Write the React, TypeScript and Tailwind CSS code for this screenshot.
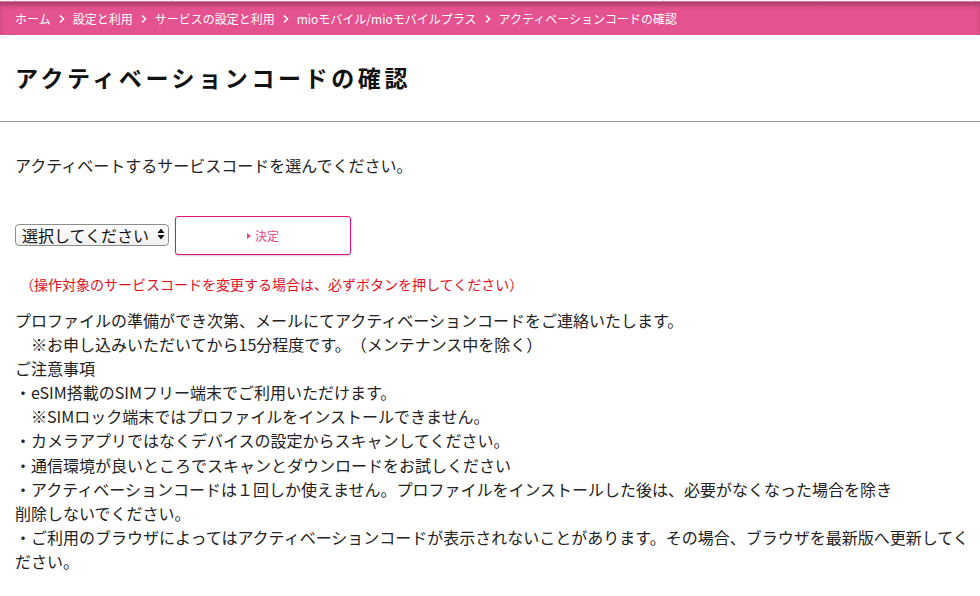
import React from "react";

const Chevron = () => (
  <svg width="6" height="10" viewBox="0 0 6 10" className="mx-[8px] shrink-0" aria-hidden>
    <path d="M1 1.5 L4.6 5 L1 8.5" fill="none" stroke="white" strokeWidth="1.5" />
  </svg>
);

export default function App() {
  const crumbs = [
    "ホーム",
    "設定と利用",
    "サービスの設定と利用",
    "mioモバイル/mioモバイルプラス",
    "アクティベーションコードの確認",
  ];
  return (
    <div
      className="w-[980px] min-h-[596px] bg-white text-[#222] [text-spacing-trim:space-all]"
      style={{ fontFamily: '"Noto Sans CJK JP", "Noto Sans", sans-serif' }}
    >
      {/* top nav remnant */}
      <div className="flex h-[1px] bg-white">
        <div className="w-[15px]" />
        <div className="w-[157px] border-l border-[#ccc]" />
        <div className="w-[491px] border-l border-[#ccc]" />
        <div className="w-[155px] border-l border-[#ccc]" />
        <div className="w-[156px] border-l border-[#ccc]" />
        <div className="flex-1 border-l border-[#ccc]" />
      </div>

      {/* breadcrumb */}
      <nav className="flex h-[34px] items-center bg-[#e4528f] px-[15px] text-[12px] leading-none text-white shadow-[inset_0_4px_4px_-1px_rgba(0,0,0,0.28)] border-t border-[#ea6fa3]">
        {crumbs.map((c, i) => (
          <React.Fragment key={c}>
            {i > 0 && <Chevron />}
            <span>{c}</span>
          </React.Fragment>
        ))}
      </nav>

      {/* title */}
      <div className="flex h-[87px] items-center border-b border-[#9a9a9a] px-[15px] pb-[2px]">
        <h1 className="text-[23px] font-bold leading-none tracking-[3.6px] text-[#111]">
          アクティベーションコードの確認
        </h1>
      </div>

      <div className="pl-[15px]">
        <p className="pt-[31px] text-[16px] leading-[24px]">
          アクティベートするサービスコードを選んでください。
        </p>

        <div className="mt-[39px] flex items-start gap-[6px]">
          <div className="relative mt-[7px]">
            <select
              defaultValue=""
              className="h-[22px] w-[154px] appearance-none rounded-[4px] border border-[#8e8e8e] bg-gradient-to-b from-white to-[#f0f0f0] pl-[6px] pr-[18px] text-[16px] leading-[20px] text-[#111]"
              style={{ fontFamily: '"Noto Sans CJK JP", sans-serif' }}
            >
              <option value="">選択してください</option>
            </select>
            <svg
              className="pointer-events-none absolute right-[4px] top-[5px]"
              width="8"
              height="12"
              viewBox="0 0 8 12"
              aria-hidden
            >
              <path d="M4 0.5 L7.5 5 L0.5 5 Z" fill="#111" />
              <path d="M0.5 7 L7.5 7 L4 11.5 Z" fill="#111" />
            </svg>
          </div>
          <button className="flex h-[39px] w-[176px] items-center justify-center rounded-[3px] border border-[#e4127e] bg-white text-[12px] leading-none text-[#e6468c] shadow-[0_1px_2px_rgba(0,0,0,0.2)]">
            <svg width="4" height="6" viewBox="0 0 4 6" className="mr-[4px]" aria-hidden>
              <path d="M0 0 L4 3 L0 6 Z" fill="#e6468c" />
            </svg>
            決定
          </button>
        </div>

        <p className="mt-[19px] pl-[5px] text-[14px] leading-[20px] text-[#e0101e]">
          （操作対象のサービスコードを変更する場合は、必ずボタンを押してください）
        </p>

        <div className="mt-[14px] text-[16px] leading-[24.1px]">
          <p>プロファイルの準備ができ次第、メールにてアクティベーションコードをご連絡いたします。</p>
          <p>　※お申し込みいただいてから15分程度です。（メンテナンス中を除く）</p>
          <p>ご注意事項</p>
          <p>・eSIM搭載のSIMフリー端末でご利用いただけます。</p>
          <p>　※SIMロック端末ではプロファイルをインストールできません。</p>
          <p>・カメラアプリではなくデバイスの設定からスキャンしてください。</p>
          <p>・通信環境が良いところでスキャンとダウンロードをお試しください</p>
          <p>
            ・アクティベーションコードは１回しか使えません。プロファイルをインストールした後は、必要がなくなった場合を除き
            <br />
            削除しないでください。
          </p>
          <p>
            ・ご利用のブラウザによってはアクティベーションコードが表示されないことがあります。その場合、ブラウザを最新版へ更新してく
            <br />
            ださい。
          </p>
        </div>
      </div>
    </div>
  );
}
